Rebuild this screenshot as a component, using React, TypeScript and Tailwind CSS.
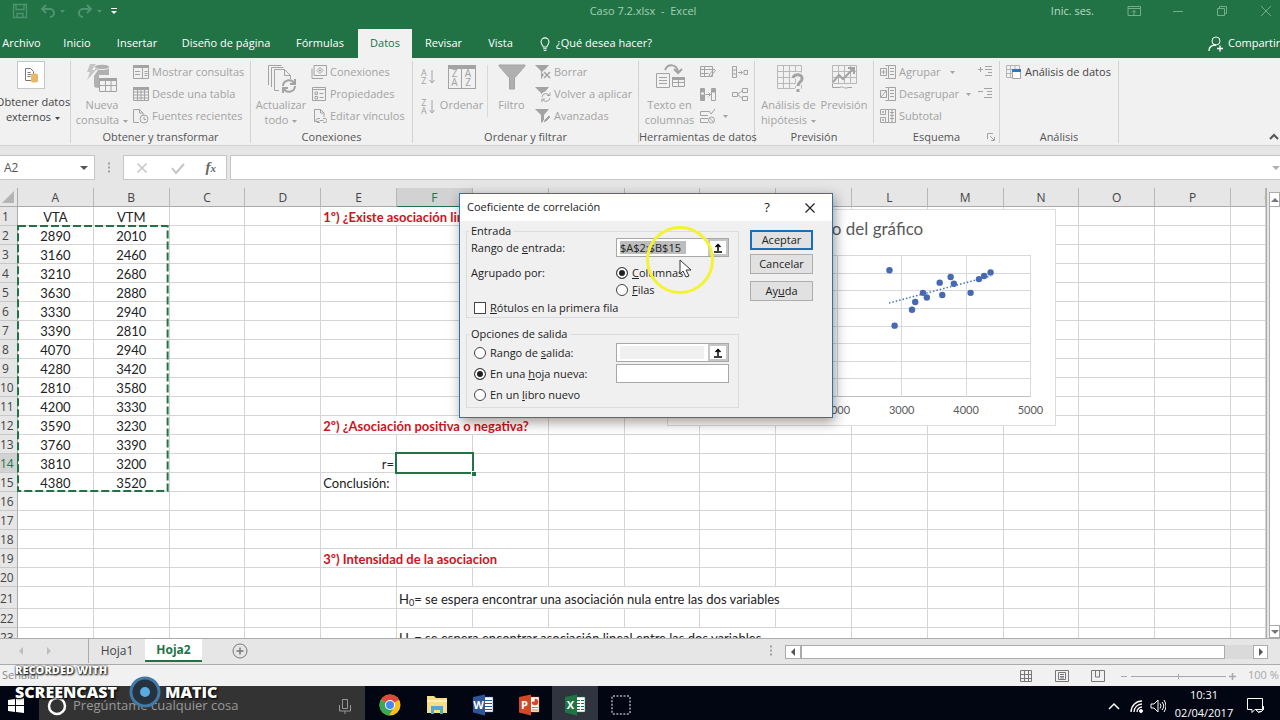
import type { ReactNode } from "react"

// Data
const vta = [2890, 3160, 3210, 3630, 3330, 3390, 4070, 4280, 2810, 4200, 3590, 3760, 3810, 4380]
const vtm = [2010, 2460, 2680, 2880, 2940, 2810, 2940, 3420, 3580, 3330, 3230, 3390, 3200, 3520]
const columns = ["A", "B", "C", "D", "E", "F", "G", "H", "I", "J", "K", "L", "M", "N", "O", "P", "Q"]
const rows = Array.from({ length: 23 }, (_, i) => i + 1)

const tabs = [
    { name: "Archivo", size: "w-[43px]" },
    { name: "Inicio", size: "w-[68px]" },
    { name: "Insertar", size: "w-[52px]" },
    { name: "Diseño de página", size: "w-[126px]" },
    { name: "Fórmulas", size: "w-[62px]" },
]

// Icons
type IconProps = { children: ReactNode; size?: string; box?: string }

const Icon = ({ children, size = "w-4 h-4", box = "0 0 16 16" }: IconProps) => (
    <svg className={`${size} shrink-0`} viewBox={box} fill="none" stroke="currentColor" strokeWidth="1">
        {children}
    </svg>
)

const Caret = () => (
    <svg className="w-[5px] h-[3px] inline-block align-middle ml-1" viewBox="0 0 5 3" fill="currentColor">
        <path d="M0 0h5L2.5 3z" />
    </svg>
)

const GridIcon = () => (
    <Icon>
        <path d="M.5 1.5h15v13H.5zM.5 6h15M.5 9h15M.5 12h15M4.5 4v10.500M8 4v10.500M11.500 4v10.500" />
        <path d="M0 1h16v3H0z" fill="currentColor" stroke="none" />
    </Icon>
)

const QueriesIcon = () => (
    <Icon>
        <path d="M.5 1.500h15v13H.5zM9.500 4v10M2 7.500h5M2 10.500h5M11.500 7.500h3M11.500 9.500h3M11.500 11.500h3" />
        <path d="M0 1h16v3H0z" fill="currentColor" stroke="none" />
    </Icon>
)

const RecentIcon = () => (
    <Icon>
        <path d="M6 14.500H.5V1.500h6l3.500 3.500v2M6.500 1.500V5H10" />
        <circle cx="11" cy="11" r="4" />
        <path d="M11 8.500V11.500h2" />
    </Icon>
)

const LinkBoxIcon = () => (
    <Icon>
        <path d="M3 1.500h12.500v10H3zM1 4.500v10h11" />
        <path d="M9 3.500l3 3-3 3-3-3z" />
        <path d="M9 5.500v2M8 6.500h2" />
    </Icon>
)

const PropertiesIcon = () => (
    <Icon>
        <path d="M1.500 1.500h13v13h-13zM1.500 3.500h13" />
        <path d="M4 6h2.500v2.500H4zM4 10.500h2.500V13H4zM8.500 7.500h4M8.500 11.500h4" />
    </Icon>
)

const EditLinksIcon = () => (
    <Icon>
        <path d="M8 13.500H3.500v-12h6l3.500 3.500v4M9.500 1.500V5H13" />
        <path d="M9 10.500H7a1.500 1.500 0 000 4h2M12 10.500h2a1.500 1.500 0 010 4h-2M8.500 12.500h4" />
    </Icon>
)

const FilterIcon = ({ kind }: { kind: "clear" | "again" | "advanced" }) => (
    <Icon>
        <path d="M0 1h14L9 7v6l-3 2V7z" fill="currentColor" stroke="none" />
        {kind === "clear" && (
            <>
                <path d="M8 7l8 8M16 7l-8 8" stroke="#f1f1f1" strokeWidth="4" />
                <path d="M9 8l6 6M15 8l-6 6" strokeWidth="1.500" />
            </>
        )}
        {kind === "again" && (
            <>
                <circle cx="11" cy="11" r="5.500" fill="#f1f1f1" stroke="none" />
                <path d="M7 11a4 4 0 017-2M15 6.500V9.500h-3M15 12a4 4 0 01-7 2M7 16v-3h3" />
            </>
        )}
        {kind === "advanced" && <path d="M8 15l1-3 5-5 2 2-5 5z" fill="#a3a3a3" stroke="#f1f1f1" />}
    </Icon>
)

const SortIcon = ({ top, bottom }: { top: string; bottom: string }) => (
    <div className="flex items-center gap-0.5">
        <div className="flex flex-col text-[9px] leading-[8px]">
            <span>{top}</span>
            <span>{bottom}</span>
        </div>
        <Icon size="w-1.5 h-4" box="0 0 6 16">
            <path d="M3 1v13M.5 11L3 14l2.500-3" />
        </Icon>
    </div>
)

const GroupIcon = ({ kind }: { kind: "add" | "remove" | "sub" }) => (
    <Icon>
        <path d="M8.500 1.500h7v13h-7zM10 4.500h4M10 7.500h4M10 10.500h4M8.500 1.500h-3M5.500 14.500h3" />
        {kind === "sub" ? (
            <path d="M.5 1.500h5v5h-5zM.5 9.500h5v5h-5zM3 3v2M2 4h2M3 11v2M2 12h2M12 2v12" />
        ) : (
            <path d="M.5 4.500h6v7h-6z" />
        )}
        {kind === "add" && <path d="M3.500 6v4M1.500 8h4" />}
        {kind === "remove" && <path d="M1 11l5-6" />}
    </Icon>
)

const Arrow = ({ dir }: { dir: "up" | "down" | "left" | "right" }) => (
    <svg className="w-2 h-2 shrink-0" viewBox="0 0 8 8" fill="currentColor">
        {dir === "up" && <path d="M0 6l4-4 4 4z" />}
        {dir === "down" && <path d="M0 2l4 4 4-4z" />}
        {dir === "left" && <path d="M6 0v8L2 4z" />}
        {dir === "right" && <path d="M2 0v8l4-4z" />}
    </svg>
)

// Ribbon pieces
const Group = ({ label, size, children }: { label: string; size: string; children: ReactNode }) => (
    <section className={`${size} shrink-0 flex flex-col border-r border-[#d2d2d2]`}>
        <div className="flex h-[70px]">{children}</div>
        <h3 className="text-center leading-3 text-[#555] whitespace-nowrap">{label}</h3>
    </section>
)

const BigButton = ({ icon, size, children }: { icon: ReactNode; size: string; children: ReactNode }) => (
    <button className={`${size} shrink-0 flex flex-col items-center text-center leading-[15px] whitespace-nowrap`}>
        <span className="h-9 shrink-0">{icon}</span>
        <span>{children}</span>
    </button>
)

const SmallButton = ({ icon, children }: { icon: ReactNode; children?: ReactNode }) => (
    <button className="h-[22px] flex items-center gap-[3px] whitespace-nowrap">
        {icon}
        {children && <span>{children}</span>}
    </button>
)

const TitleBar = () => (
    <div className="h-[22px] flex items-center text-[#a3d0b6]">
        <div className="flex-1 flex items-center gap-3 pl-3 text-[#4f9470]">
            <button aria-label="Guardar">
                <Icon><path d="M1.500 1.500h13v13h-13zM4 1.500v5h8v-5M5 14.500v-4h6v4" strokeWidth="1.300" /></Icon>
            </button>
            <button aria-label="Deshacer" className="flex items-center">
                <Icon><path d="M2 6h8a4 4 0 010 8M6 2L2 6l4 4" strokeWidth="2" /></Icon>
                <Caret />
            </button>
            <button aria-label="Rehacer" className="flex items-center">
                <Icon><path d="M14 6H6a4 4 0 000 8M10 2l4 4-4 4" strokeWidth="2" /></Icon>
                <Caret />
            </button>
            <button aria-label="Personalizar" className="-ml-1 text-white">
                <Icon size="w-2 h-2" box="0 0 8 8"><path d="M1 1.500h6" /><path d="M1 4h6L4 7z" fill="currentColor" stroke="none" /></Icon>
            </button>
        </div>
        <h1 className="whitespace-pre">Caso 7.2.xlsx  -  Excel</h1>
        <div className="flex-1 flex items-center justify-end gap-7 pr-1.5 text-[#75ad8d]">
            <button className="text-[#b9dbc8] mr-1">Inic. ses.</button>
            <button aria-label="Opciones de la cinta"><Icon><path d="M2 3.500h12.500v9H2zM2 5.500h12.500M8 12V7.500M6 9.500l2-2 2 2" /></Icon></button>
            <button aria-label="Minimizar"><Icon><path d="M3 8.500h10" /></Icon></button>
            <button aria-label="Restaurar"><Icon><path d="M3.500 5.500h7v7h-7zM5.500 5.500v-2h7v7h-2" /></Icon></button>
            <button aria-label="Cerrar"><Icon><path d="M3 3l10 10M13 3L3 13" /></Icon></button>
        </div>
    </div>
)

const TabBar = () => (
    <nav className="h-9 flex items-end whitespace-nowrap">
        {tabs.map(tab => (
            <button key={tab.name} className={`${tab.size} h-[29px] shrink-0 text-center`}>{tab.name}</button>
        ))}
        <div className="w-[7px]"></div>
        <button className="w-[54px] h-[29px] bg-[#f1f1f1] text-[#217346]">Datos</button>
        <button className="w-[63px] h-[29px]">Revisar</button>
        <button className="w-[51px] h-[29px]">Vista</button>
        <button className="h-[29px] flex items-center gap-1 pl-3">
            <Icon size="w-3.5 h-4"><path d="M6 11.500c0-2-2.500-2.500-2.500-6a4.500 4.500 0 019 0c0 3.500-2.500 4-2.500 6zM6 13.500h4M6.500 15.500h3" strokeWidth="1.200" /></Icon>
            ¿Qué desea hacer?
        </button>
        <button className="w-[72px] h-[29px] ml-auto flex items-center gap-1 overflow-hidden">
            <Icon><circle cx="8" cy="5" r="4" /><path d="M1 15c0-4 3-6 7-6M9 12.500h6M12 9.500v6" strokeWidth="1.300" /></Icon>
            Compartir
        </button>
    </nav>
)

const Ribbon = () => (
    <div className="h-[88px] flex pt-[3px] pb-0.5 bg-[#f1f1f1] border-b border-[#d2d2d2] text-[#a3a3a3]">
        <Group label="" size="w-[71px]">
            <button className="w-[66px] flex flex-col items-center leading-[15px] text-[#444] whitespace-nowrap">
                <span className="w-7 h-7 mb-[5px] ml-[-4px] shrink-0 flex items-center justify-center bg-white border border-[#c6c6c6]">
                    <Icon>
                        <path d="M9 13.500H2.500v-12h5l3 3V7M4.500 5.500h3M4.500 7.500h4M4.500 9.500h3" stroke="#777" />
                        <path d="M8 8c0-2 7-2 7 0v6c0 2-7 2-7 0z" fill="#e8b866" stroke="none" />
                    </Icon>
                </span>
                <span>Obtener datos<br />externos<Caret /></span>
            </button>
        </Group>
        <Group label="Obtener y transformar" size="w-[180px]">
            <BigButton
                size="w-[62px]"
                icon={
                    <Icon size="w-8 h-8" box="0 0 32 32">
                        <path d="M4 3h6L6 9h4L1 19l3-8H1z" fill="#c4c4c4" stroke="none" />
                        <path d="M9 6c0-3 14-3 14 0v8H13v13c-3 0-5-1-5-2V15l4-6H9z" fill="#b0b0b0" stroke="none" />
                        <path d="M9 7c3 2 11 2 14 0" stroke="#f1f1f1" />
                        <path d="M13.500 17.500h17v13h-17zM13.500 24.500h17M19.500 20v10M25 20v10" fill="#f1f1f1" />
                        <path d="M13 17h18v3H13z" fill="#a3a3a3" stroke="none" />
                    </Icon>
                }
            >
                Nueva<br />consulta<Caret />
            </BigButton>
            <div>
                <SmallButton icon={<QueriesIcon />}>Mostrar consultas</SmallButton>
                <SmallButton icon={<GridIcon />}>Desde una tabla</SmallButton>
                <SmallButton icon={<RecentIcon />}>Fuentes recientes</SmallButton>
            </div>
        </Group>
        <Group label="Conexiones" size="w-[162px]">
            <BigButton
                size="w-[60px]"
                icon={
                    <Icon size="w-8 h-8" box="0 0 32 32">
                        <path d="M3.500 24V4.500h13M6.500 26V6.500h12M14 29.500H9.500v-21h10l6 6V18M19.500 8.500v6h6" />
                        <path d="M18 25a6 6 0 0111-3M30 18v5h-5M30 25a6 6 0 01-11 3M18 32v-5h5" strokeWidth="2" />
                    </Icon>
                }
            >
                Actualizar<br />todo<Caret />
            </BigButton>
            <div>
                <SmallButton icon={<LinkBoxIcon />}>Conexiones</SmallButton>
                <SmallButton icon={<PropertiesIcon />}>Propiedades</SmallButton>
                <SmallButton icon={<EditLinksIcon />}>Editar vínculos</SmallButton>
            </div>
        </Group>
        <Group label="Ordenar y filtrar" size="w-[226px]">
            <div className="w-[23px] pl-2 pt-2 flex flex-col gap-3.5">
                <button aria-label="Ordenar de A a Z"><SortIcon top="A" bottom="Z" /></button>
                <button aria-label="Ordenar de Z a A"><SortIcon top="Z" bottom="A" /></button>
            </div>
            <BigButton
                size="w-[51px]"
                icon={
                    <span className="mt-1 w-7 h-6 grid grid-cols-2 border border-t-4 border-current text-[10px] leading-[9px]">
                        <span className="border-r border-current">Z<br />A</span>
                        <span>A<br />Z</span>
                    </span>
                }
            >
                Ordenar
            </BigButton>
            <div className="h-[52px] mt-1 border-l border-[#d8d8d8]"></div>
            <BigButton
                size="w-[47px]"
                icon={<Icon size="w-7 h-8" box="0 0 28 32"><path d="M1 4h26v1L16.500 17v11h-5V17L1 5z" fill="#b0b0b0" /></Icon>}
            >
                Filtro
            </BigButton>
            <div>
                <SmallButton icon={<FilterIcon kind="clear" />}>Borrar</SmallButton>
                <SmallButton icon={<FilterIcon kind="again" />}>Volver a aplicar</SmallButton>
                <SmallButton icon={<FilterIcon kind="advanced" />}>Avanzadas</SmallButton>
            </div>
        </Group>
        <Group label="Herramientas de datos" size="w-[116px]">
            <BigButton
                size="w-[61px]"
                icon={
                    <Icon size="w-8 h-8" box="0 0 32 32">
                        <path d="M2.500 12.500h13v14h-13zM5 16.500h8M5 19.500h8M5 22.500h8" />
                        <path d="M11 9c3-7 12-6 13 2M20 8l4 4 4-4" strokeWidth="2" />
                        <path d="M18.500 16.500h12v9h-12zM18.500 21.500h12M24.500 17v8" />
                        <path d="M18 16h13v3H18z" fill="currentColor" stroke="none" />
                    </Icon>
                }
            >
                Texto en<br />columnas
            </BigButton>
            <div className="w-8">
                <SmallButton icon={<Icon><path d="M.5 2.500h12v10H.5zM.5 5.500h12M.5 9.500h8M4.500 3v9M9 11l5-6 1.500 1.500-5 6z" /></Icon>} />
                <SmallButton icon={<Icon><path d="M.5 2.500h4v12h-4zM11.500 2.500h4v12h-4zM5.500 8.500h5M8.500 6.500l2 2-2 2" /><path d="M1 3h3v3H1zM1 9h3v5H1zM12 3h3v3h-3z" fill="currentColor" /></Icon>} />
                <SmallButton icon={<Icon><path d="M9 3.500H.5v4H8M9 3l2 3 4-5M8 10.500H.5v4H8" /><circle cx="11.500" cy="12" r="3" /><path d="M9.500 10l4 4" /></Icon>}>
                    <Caret />
                </SmallButton>
            </div>
            <div>
                <SmallButton icon={<Icon><path d="M.5 2.500h4v11h-4zM.5 6h4M.5 10h4M6 8.500h4M8.500 6.500l2 2-2 2M12 6.500h3.500v4H12z" /></Icon>} />
                <SmallButton icon={<Icon><path d="M.5 6.500h5v4h-5zM10.500 2.500h5v4h-5zM10.500 10.500h5v4h-5zM5.500 8.500l5-4M5.500 8.500l5 4" /></Icon>} />
            </div>
        </Group>
        <Group label="Previsión" size="w-[119px]">
            <BigButton
                size="w-[67px]"
                icon={
                    <Icon size="w-8 h-8" box="0 0 32 32">
                        <path d="M4.500 4.500h24v23h-24zM4.500 10.500h24M4.500 16.500h24M4.500 22.500h24M10.500 5v22M16.500 5v22M22.500 5v22" stroke="#b8b8b8" />
                        <path d="M20 17c1-5 10-4 9 1 0 3-4 3-4 7M25 27v4" stroke="#f1f1f1" strokeWidth="6" />
                        <path d="M20 17c1-5 10-4 9 1 0 3-4 3-4 7M25 28v3" strokeWidth="3" />
                    </Icon>
                }
            >
                Análisis de<br />hipótesis<Caret />
            </BigButton>
            <BigButton
                size="w-[44px]"
                icon={
                    <Icon size="w-8 h-8" box="0 0 32 32">
                        <path d="M4.500 4.500h24v18h-24zM4.500 10.500h24M4.500 16.500h24M10.500 5v18M16.500 5v18M22.500 5v18" stroke="#b8b8b8" />
                        <path d="M4.500 23v3.500H12c2-2 5 2 8 0h4" />
                        <path d="M5 21l6-7 4 4 11-11M20 7h6v6" strokeWidth="2" />
                    </Icon>
                }
            >
                Previsión
            </BigButton>
        </Group>
        <Group label="Esquema" size="w-[126px]">
            <div className="pl-[6px] w-[103px] shrink-0">
                <SmallButton icon={<GroupIcon kind="add" />}>Agrupar &nbsp;<Caret /></SmallButton>
                <SmallButton icon={<GroupIcon kind="remove" />}>Desagrupar <Caret /></SmallButton>
                <SmallButton icon={<GroupIcon kind="sub" />}>Subtotal</SmallButton>
            </div>
            <div className="flex flex-col">
                <SmallButton icon={<Icon><path d="M8 2.500h7M8 5.500h7M11 8.500h4M8 11.500h7M1 5.500h5M3.500 3v5" /></Icon>} />
                <SmallButton icon={<Icon><path d="M7 2.500h8M10 5.500h5M10 8.500h5M7 11.500h8M1 5.500h5" /></Icon>} />
                <button aria-label="Opciones de esquema" className="mt-auto -mb-2.5 ml-2.5">
                    <Icon size="w-2 h-2" box="0 0 8 8"><path d="M.5 6V.5H6M3 3l4 4M7.500 4v3.500H4" /></Icon>
                </button>
            </div>
        </Group>
        <Group label="Análisis" size="w-[119px]">
            <div className="pl-1.5 text-[#444]">
                <SmallButton
                    icon={
                        <Icon>
                            <path d="M.5 1.500h13v12H.5zM.5 5.500h13M.5 9.500h13M4.500 1.500v12M9 1.500v12" stroke="#b5b5b5" />
                            <path d="M6.500 6.500h8v8h-8z" fill="#fff" stroke="#a3a3a3" />
                            <path d="M6 5h9v3H6z" fill="#2f78b7" stroke="none" />
                        </Icon>
                    }
                >
                    Análisis de datos
                </SmallButton>
            </div>
        </Group>
        <button aria-label="Contraer la cinta" className="ml-auto self-end text-[#555]">
            <Icon size="w-3 h-3" box="0 0 12 12"><path d="M2 8l4-4 4 4" strokeWidth="2" /></Icon>
        </button>
    </div>
)

const FormulaBar = () => (
    <div className="h-[42px] pt-[9px] flex items-start text-[#555]">
        <label className="w-[95px] h-[25px] flex items-center pr-1.5 bg-white border border-l-0 border-[#c6c6c6]">
            <input aria-label="Cuadro de nombres" defaultValue="A2" className="w-full min-w-0 pl-1 text-[12px] outline-none" />
            <Arrow dir="down" />
        </label>
        <span className="w-[28px] h-[25px] flex items-center justify-center text-[#a0a0a0]">
            <Icon size="w-1 h-3" box="0 0 4 12"><path d="M1 1.500h2M1 5.500h2M1 9.500h2" strokeWidth="2" /></Icon>
        </span>
        <div className="w-[104px] h-[25px] flex items-center justify-around bg-white border border-[#c6c6c6] text-[#c4c4c4]">
            <button aria-label="Cancelar"><Icon><path d="M3.500 3.500l9 9M12.500 3.500l-9 9" strokeWidth="1.500" /></Icon></button>
            <button aria-label="Introducir"><Icon><path d="M2 8l4 5 8-9" strokeWidth="2" /></Icon></button>
            <button aria-label="Insertar función" className="font-['Liberation_Serif'] italic font-bold text-[15px] leading-4 text-[#666]">f<span className="text-[11px]">x</span></button>
        </div>
        <label className="flex-1 h-[25px] ml-[3px] flex items-center bg-white border-y border-l border-[#c6c6c6] text-[#b0b0b0]">
            <input aria-label="Barra de fórmulas" className="w-full outline-none" />
            <Arrow dir="down" />
        </label>
    </div>
)

const cell = "border-r border-b border-[#d4d4d4] px-0 pb-0 pt-0.5 whitespace-nowrap"

const SheetRow = ({ row }: { row: number }) => {
    const blanks = (count: number) => Array.from({ length: count }, (_, i) => <td key={`Blank_${row}_${i}`} className={cell}></td>)
    const isData = row >= 2 && row <= 15

    return (
        <tr className={row === 21 ? "h-[22px]" : "h-[19px]"}>
            <th className={`border-r border-b pl-0 pb-0 pt-0.5 pr-1.5 font-normal font-['Open_Sans'] text-[12px] ${row === 14 ? "bg-[#d2d2d2] border-r-[#217346] text-[#217346]" : "bg-[#e6e6e6] border-r-[#ababab] text-[#444]"} border-b-[#c8c8c8]`}>
                {row}
            </th>
            <td className={`${cell} text-center ${row === 2 ? "relative" : ""}`}>
                {row === 1 ? "VTA" : isData ? vta[row - 2] : ""}
                {/* Marching ants over A2:B15 */}
                {row === 2 && (
                    <svg className="absolute top-0 left-0 w-[200%] h-[265px] overflow-visible" fill="none" stroke="#217346" strokeWidth="2">
                        <rect x="0" y="0" width="100%" height="100%" strokeDasharray="8 3" />
                    </svg>
                )}
            </td>
            <td className={`${cell} text-center`}>{row === 1 ? "VTM" : isData ? vtm[row - 2] : ""}</td>
            {blanks(2)}
            {row === 1 && <><td colSpan={4} className={`${cell} pl-0.5 font-bold text-[#d0121b]`}>1º) ¿Existe asociación lineal?</td>{blanks(9)}</>}
            {row === 12 && <><td colSpan={3} className={`${cell} pl-0.5 font-bold text-[#d0121b]`}>2º) ¿Asociación positiva o negativa?</td>{blanks(10)}</>}
            {row === 14 && (
                <>
                    <td className={`${cell} pr-0.5 text-right`}>r=</td>
                    <td className={`${cell} relative`}>
                        <span className="absolute -inset-0.5 border-2 border-[#217346]"></span>
                        <span className="absolute -right-1 -bottom-1 w-[5px] h-[5px] bg-[#217346] border-t border-l border-white"></span>
                    </td>
                    {blanks(11)}
                </>
            )}
            {row === 15 && <><td className={`${cell} pl-0.5`}>Conclusión:</td>{blanks(12)}</>}
            {row === 19 && <><td colSpan={3} className={`${cell} pl-0.5 font-bold text-[#d0121b]`}>3º) Intensidad de la asociacion</td>{blanks(10)}</>}
            {row === 21 && (
                <>
                    {blanks(1)}
                    <td colSpan={6} className={`${cell} pl-0.5`}>H<sub className="text-[9px] leading-none">0</sub>= se espera encontrar una asociación nula entre las dos variables</td>
                    {blanks(6)}
                </>
            )}
            {row === 23 && (
                <>
                    {blanks(1)}
                    <td colSpan={6} className={`${cell} pl-0.5`}>H<sub className="text-[9px] leading-none">1</sub>= se espera encontrar asociación lineal entre las dos variables</td>
                    {blanks(6)}
                </>
            )}
            {![1, 12, 14, 15, 19, 21, 23].includes(row) && blanks(13)}
        </tr>
    )
}

const px = (value: number) => 40.5 + value * 0.0644
const py = (value: number) => 186.5 - value * 0.03525

const Chart = () => (
    <svg className="absolute left-[667px] top-[21px] w-[389px] h-[217px] bg-white border border-[#dcdcdc] font-['Lato']" viewBox="0 0 387 215">
        <text x="193" y="25" fontSize="17" fill="#595959" textAnchor="middle">Título del gráfico</text>
        {[0, 500, 1000, 1500, 2000, 2500, 3000, 3500, 4000].map(v => (
            <path key={`Y_${v}`} d={`M40 ${Math.floor(py(v)) + 0.5}H363`} stroke={v === 0 ? "#bfbfbf" : "#d9d9d9"} />
        ))}
        {[0, 1000, 2000, 3000, 4000, 5000].map(v => (
            <g key={`X_${v}`}>
                <path d={`M${Math.floor(px(v)) + 0.5} 45V187`} stroke="#d9d9d9" />
                <text x={px(v)} y="204" fontSize="11" fill="#595959" textAnchor="middle">{v}</text>
            </g>
        ))}
        <path d="M221 93L323 66" stroke="#4472c4" strokeWidth="1.500" strokeDasharray="1.500 2" />
        {vta.map((v, i) => (
            <circle key={`Point_${i}`} cx={px(v)} cy={py(vtm[i])} r="3.200" fill="#4569b2" />
        ))}
    </svg>
)

const Sheet = () => (
    <div className="flex-1 min-h-0 flex bg-[#e6e6e6]">
        <div className="flex-1 min-w-0 relative overflow-hidden border-r border-[#ababab]">
            <table className="w-full table-fixed border-separate border-spacing-0 bg-white font-['Lato'] text-[13px] leading-[16px] text-[#222]">
                <colgroup>
                    <col className="w-[18px]" />
                    {columns.map(name => <col key={`Col_${name}`} className={name === "Q" ? "w-[35px]" : ""} />)}
                </colgroup>
                <thead>
                    <tr className="h-[19px] bg-[#e6e6e6] text-[#444] font-['Open_Sans'] text-[12px]">
                        <th className="p-0 border-r border-b border-[#ababab]">
                            <Icon size="w-3 h-3 ml-0.5" box="0 0 12 12"><path d="M12 0v12H0z" fill="#b4b4b4" stroke="none" /></Icon>
                        </th>
                        {columns.map(name => (
                            <th key={`Head_${name}`} className={`px-0 pb-0 pt-0.5 overflow-hidden font-normal border-r border-b ${name === "F" ? "bg-[#d2d2d2] text-[#217346] border-b-[#217346]" : "border-b-[#ababab]"} border-r-[#b8b8b8]`}>
                                {name === "Q" ? <span className="block w-[76px]">Q</span> : name}
                            </th>
                        ))}
                    </tr>
                </thead>
                <tbody>
                    {rows.map(row => <SheetRow key={`Row_${row}`} row={row} />)}
                </tbody>
            </table>
            <Chart />
        </div>
        <div className="w-[13px] pl-0.5 flex flex-col pt-1 text-[#777]">
            <button aria-label="Subir" className="h-[15px] shrink-0 flex items-center justify-center bg-white border border-[#ababab]"><Arrow dir="up" /></button>
            <div className="flex-1 bg-white border-l border-[#ababab]"></div>
            <button aria-label="Bajar" className="h-[13px] shrink-0 flex items-center justify-center bg-white border border-[#ababab]"><Arrow dir="down" /></button>
        </div>
    </div>
)

const SheetTabs = () => (
    <div className="h-[27px] flex items-start border-y border-[#ababab] bg-[#e6e6e6] text-[12px] text-[#444]">
        <div className="w-[88px] h-6 flex items-center gap-5 pl-[17px] text-[#bdbdbd]">
            <button aria-label="Hoja anterior"><Arrow dir="left" /></button>
            <button aria-label="Hoja siguiente"><Arrow dir="right" /></button>
        </div>
        <button className="w-[57px] h-6 border-l border-[#ababab]">Hoja1</button>
        <button className="w-[57px] h-[23px] bg-white border-b-2 border-[#217346] font-bold text-[#217346]">Hoja2</button>
        <button aria-label="Hoja nueva" className="h-6 ml-[30px] flex items-center text-[#777]">
            <Icon><circle cx="8" cy="8" r="7" /><path d="M8 4.500v7M4.500 8h7" strokeWidth="1.500" /></Icon>
        </button>
        <span className="h-6 ml-auto mr-3 flex items-center text-[#a0a0a0]">
            <Icon size="w-1 h-3" box="0 0 4 12"><path d="M1 1.500h2M1 5.500h2M1 9.500h2" strokeWidth="2" /></Icon>
        </span>
        <div className="w-[483px] h-3.5 mt-1.5 mr-3 flex bg-[#dadada] text-[#555]">
            <button aria-label="Izquierda" className="w-4 flex items-center justify-center bg-white border border-[#ababab]"><Arrow dir="left" /></button>
            <div className="flex-1 mr-7 bg-white border border-[#ababab]"></div>
            <button aria-label="Derecha" className="w-[15px] flex items-center justify-center bg-white border border-[#ababab]"><Arrow dir="right" /></button>
        </div>
    </div>
)

const StatusBar = () => (
    <div className="h-[21px] pl-0.5 flex items-center bg-[#f1f1f1] text-[#888]">
        <span>Señalar</span>
        <div className="ml-auto flex items-center gap-5 text-[#777]">
            <button aria-label="Normal"><Icon><path d="M2.500 2.500h11v11h-11zM2.500 6.500h11M2.500 10.500h11M6.500 2.500v11M10.500 2.500v11" /></Icon></button>
            <button aria-label="Diseño de página"><Icon><path d="M1.500 2.500h13v11h-13zM4.500 4.500h7v7h-7zM6 6.500h4M6 8.500h4M6 10h4" /></Icon></button>
            <button aria-label="Salto de página"><Icon><path d="M1.500 2.500h13v11h-13zM5.500 3v6M9.500 3v6M5.500 9h4" /></Icon></button>
        </div>
        <div className="ml-3.5 w-[160px] flex items-center text-[#a8a8a8] whitespace-nowrap overflow-hidden">
            <Icon size="w-[116px] h-3" box="0 0 116 12">
                <path d="M1 6.500h6M11 6.500h95M58.500 4v5" />
                <path d="M109 6.500h7M112.500 3v7" strokeWidth="1.500" />
            </Icon>
            <span className="pl-3">100 %</span>
        </div>
    </div>
)

const OfficeIcon = ({ letter, color }: { letter: string; color: string }) => (
    <svg className="w-[22px] h-[22px]" viewBox="0 0 22 22">
        <path d="M11 3h10v15H11z" fill="#fff" stroke={color} strokeWidth=".5" />
        {letter === "P" ? (
            <path d="M17 5a3 3 0 11-3 3h3zM14 13.500h6M14 16h6" fill={color} stroke={color} strokeWidth=".8" />
        ) : (
            <path d="M13 6.500h7M13 9.500h7M13 12.500h7M13 15.500h7" stroke={color} strokeWidth="1.200" />
        )}
        {letter === "X" && <path d="M16.500 4v13" stroke="#fff" />}
        <path d="M1 3l12-2.500v21L1 18.500z" fill={color} />
        <text x="6.500" y="15" fontSize="11" fontWeight="700" fill="#fff" textAnchor="middle">{letter}</text>
    </svg>
)

const Taskbar = () => (
    <div className="h-[34px] flex items-stretch bg-[#020512] text-white">
        <button aria-label="Inicio" className="w-[39px] pl-2 flex items-center pt-1">
            <Icon><path d="M0 3l7-1v6H0zM8 2l8-1v7H8zM0 9h7v6l-7-1zM8 9h8v7l-8-1z" fill="#fff" stroke="none" /></Icon>
        </button>
        <label className="w-[326px] pl-2 pr-3 pt-1.5 flex items-center gap-1.5 bg-[#333] text-[#999]">
            <Icon size="w-5 h-5" box="0 0 20 20"><circle cx="10" cy="10" r="8" stroke="#fff" strokeWidth="2.500" /></Icon>
            <input aria-label="Buscar" placeholder="Pregúntame cualquier cosa" className="flex-1 text-[13px] outline-none placeholder:text-[#999]" />
            <Icon><path d="M5.500 1.500h5v9h-5zM2.500 7v6h11V7M8 13v3" /></Icon>
        </label>
        <div className="flex pt-1 pl-0.5">
            <button aria-label="Chrome" className="w-[46px] flex items-center justify-center">
                <svg className="w-[22px] h-[22px]" viewBox="0 0 22 22">
                    <circle cx="11" cy="11" r="10.500" fill="#fbc116" />
                    <path d="M11 11L1.900 5.700A10.500 10.500 0 0120.100 5.700z" fill="#dd4b3e" />
                    <path d="M1.900 5.700L11 11l3 4-4 6.500A10.500 10.500 0 011.900 5.700z" fill="#3aa757" />
                    <path d="M11 6h9.300L18 4z" fill="#dd4b3e" />
                    <circle cx="11" cy="11" r="5" fill="#fff" />
                    <circle cx="11" cy="11" r="4" fill="#4688f1" />
                </svg>
            </button>
            <button aria-label="Explorador" className="w-[47px] flex items-center justify-center">
                <svg className="w-[22px] h-5" viewBox="0 0 22 20">
                    <path d="M1 1h7l2 2h11v15H1z" fill="#f7dd86" />
                    <path d="M1 5h20v2H1z" fill="#fbeeb4" />
                    <path d="M5 19v-8h12v8h-3v-4H8v4z" fill="#4fa9d6" />
                </svg>
            </button>
            <button aria-label="Word" className="w-[46px] flex items-center justify-center"><OfficeIcon letter="W" color="#2b579a" /></button>
            <button aria-label="PowerPoint" className="w-[46px] flex items-center justify-center"><OfficeIcon letter="P" color="#d24726" /></button>
            <button aria-label="Excel" className="w-[46px] -mt-1 pt-1 flex items-center justify-center bg-[#30343f]"><OfficeIcon letter="X" color="#217346" /></button>
            <button aria-label="Recorte" className="w-[46px] flex items-center justify-center">
                <Icon size="w-5 h-5" box="0 0 20 20"><rect x="1" y="1" width="18" height="18" rx="1" strokeDasharray="2 1.500" /></Icon>
            </button>
        </div>
        <div className="ml-auto pr-4 flex items-center text-[11px]">
            <div className="flex items-center gap-1.5 pt-1.5">
                <Icon><path d="M3 11l5-5 5 5" strokeWidth="1.500" /></Icon>
                <Icon><path d="M3 14A11 11 0 0114 3M6 14a8 8 0 018-8M9 14a5 5 0 015-5" strokeWidth="1.300" /><circle cx="13" cy="13" r="1.500" fill="#fff" /></Icon>
                <Icon><path d="M1 6h3l4-4v12l-4-4H1zM10 5.500q2 2.500 0 5M12 4q3.500 4 0 8M14 2q4 6 0 12" /></Icon>
            </div>
            <time className="w-[76px] pt-0.5 text-center leading-[18px]">10:31<br />02/04/2017</time>
            <button aria-label="Notificaciones" className="ml-1 pt-1">
                <Icon size="w-[18px] h-[18px]" box="0 0 18 18"><path d="M1.500 2.500h15v11H9l-3 3v-3H1.500z" /><path d="M10 14a4 4 0 007-4 4 4 0 01-7 4z" fill="#fff" /></Icon>
            </button>
        </div>
    </div>
)

// Dialog
const radio = "appearance-none shrink-0 w-3 h-3 rounded-full border border-[#444] bg-white checked:bg-[#222] checked:shadow-[inset_0_0_0_2px_white]"

const RangeBox = ({ value, id, fill }: { value: string; id: string; fill: string }) => (
    <span className="w-[113px] h-[19px] flex items-center pl-[3px] bg-white border border-[#a8a8a8]">
        <input id={id} aria-label={id} defaultValue={value} className={`${fill} h-[13px] outline-none`} />
        <button aria-label="Seleccionar rango" className="ml-auto w-5 h-full flex items-center justify-center border-2 border-[#c6c6c6] text-black">
            <Icon size="w-2.5 h-2.5" box="0 0 10 10"><path d="M5 8V2M2.500 4L5 1.500 7.500 4M1 9h8" strokeWidth="1.500" /></Icon>
        </button>
    </span>
)

const Dialog = () => (
    <div role="dialog" aria-label="Coeficiente de correlación" className="absolute left-[459px] top-[193px] w-[374px] h-[225px] flex flex-col bg-[#f0f0f0] border border-[#2f72a8] shadow-[2px_4px_12px_rgba(0,0,0,0.4)] text-[#222]">
        <header className="h-[27px] shrink-0 flex items-center pl-[7px] pr-3.5 bg-white">
            <h2 className="flex-1">Coeficiente de correlación</h2>
            <button aria-label="Ayuda" className="w-4 mr-[27px] text-[13px]">?</button>
            <button aria-label="Cerrar"><Icon><path d="M3.500 3.500l9 9M12.500 3.500l-9 9" strokeWidth="1.200" /></Icon></button>
        </header>
        <div className="flex-1 flex gap-[11px] pl-1.5 pt-1">
            <div className="w-[273px] flex flex-col gap-2.5">
                <fieldset className="h-[93px] px-1 border border-[#dcdcdc]">
                    <legend className="-ml-0.5 px-0.5 leading-3">Entrada</legend>
                    <div className="grid grid-cols-[145px_1fr] items-center pt-px leading-4">
                        <label htmlFor="entrada">Rango de <u>e</u>ntrada:</label>
                        <RangeBox id="entrada" value="$A$2:$B$15" fill="w-[66px] bg-[#bdbdbd]" />
                        <span className="pt-2 self-start">Agrupado por:</span>
                        <div className="pt-[7px]">
                            <label className="h-[17px] flex items-center gap-1"><input type="radio" name="grupo" defaultChecked className={radio} /><span><u>C</u>olumnas</span></label>
                            <label className="h-[17px] flex items-center gap-1"><input type="radio" name="grupo" className={radio} /><span><u>F</u>ilas</span></label>
                        </div>
                    </div>
                    <label className="h-5 pl-[3px] flex items-center gap-1">
                        <input type="checkbox" className="appearance-none w-3 h-3 border border-[#444] bg-white" />
                        <span><u>R</u>ótulos en la primera fila</span>
                    </label>
                </fieldset>
                <fieldset className="h-[80px] px-1 border border-[#dcdcdc]">
                    <legend className="-ml-0.5 px-0.5 leading-3">Opciones de salida</legend>
                    <div className="grid grid-cols-[145px_1fr] items-center pt-0.5 leading-4">
                        <label className="h-[21px] pl-[3px] flex items-center gap-1"><input type="radio" name="salida" className={radio} /><span>Rango de <u>s</u>alida:</span></label>
                        <RangeBox id="salida" value="" fill="w-[84px] bg-[#f0f0f0]" />
                        <label className="h-[21px] pl-[3px] flex items-center gap-1"><input type="radio" name="salida" defaultChecked className={radio} /><span>En una <u>h</u>oja nueva:</span></label>
                        <input aria-label="Hoja nueva" className="w-[113px] h-[19px] bg-white border border-[#a8a8a8]" />
                        <label className="h-[21px] pl-[3px] flex items-center gap-1"><input type="radio" name="salida" className={radio} /><span>En un <u>l</u>ibro nuevo</span></label>
                    </div>
                </fieldset>
            </div>
            <div className="flex flex-col pt-[5px]">
                <button className="w-[63px] h-5 mb-1 bg-[#e1e1e1] border-2 border-[#1a6fb8]">Aceptar</button>
                <button className="w-[63px] h-5 mb-[7px] bg-[#e1e1e1] border border-[#adadad]">Cancelar</button>
                <button className="w-[63px] h-5 bg-[#e1e1e1] border border-[#adadad]">Ay<u>u</u>da</button>
            </div>
        </div>
    </div>
)

// Click highlight ring and mouse pointer
const Pointer = () => (
    <svg className="absolute left-[644px] top-[224px] w-[72px] h-[72px] pointer-events-none" viewBox="0 0 72 72">
        <circle cx="36" cy="36" r="32.500" fill="none" stroke="#f3f334" strokeWidth="3" />
        <path d="M36 36v14l3-3 3 6 3-1-3-6h5z" fill="#fff" stroke="#333" />
    </svg>
)

const Watermark = () => (
    <div className="absolute left-[15px] bottom-3 text-white font-extrabold [text-shadow:1px_1px_2px_#000,0_0_2px_#000] pointer-events-none">
        <div className="text-[11px] leading-3">RECORDED WITH</div>
        <div className="h-8 flex items-center gap-1 text-[16px]">
            <span className="w-[110px]">SCREENCAST</span>
            <svg className="w-8 h-8" viewBox="0 0 32 32">
                <circle cx="16" cy="16" r="14" fill="#26323d" stroke="#3f7aa8" strokeWidth="3" />
                <circle cx="16" cy="16" r="5" fill="#5aabe0" />
            </svg>
            <span>MATIC</span>
        </div>
    </div>
)

const App = () => (
    <div className="relative h-screen flex flex-col overflow-hidden bg-[#e6e6e6] font-['Open_Sans',sans-serif] text-[11px]">
        <header className="bg-[#217346] text-white">
            <TitleBar />
            <TabBar />
        </header>
        <Ribbon />
        <FormulaBar />
        <Sheet />
        <SheetTabs />
        <StatusBar />
        <Taskbar />
        <Dialog />
        <Pointer />
        <Watermark />
    </div>
)

export default App
